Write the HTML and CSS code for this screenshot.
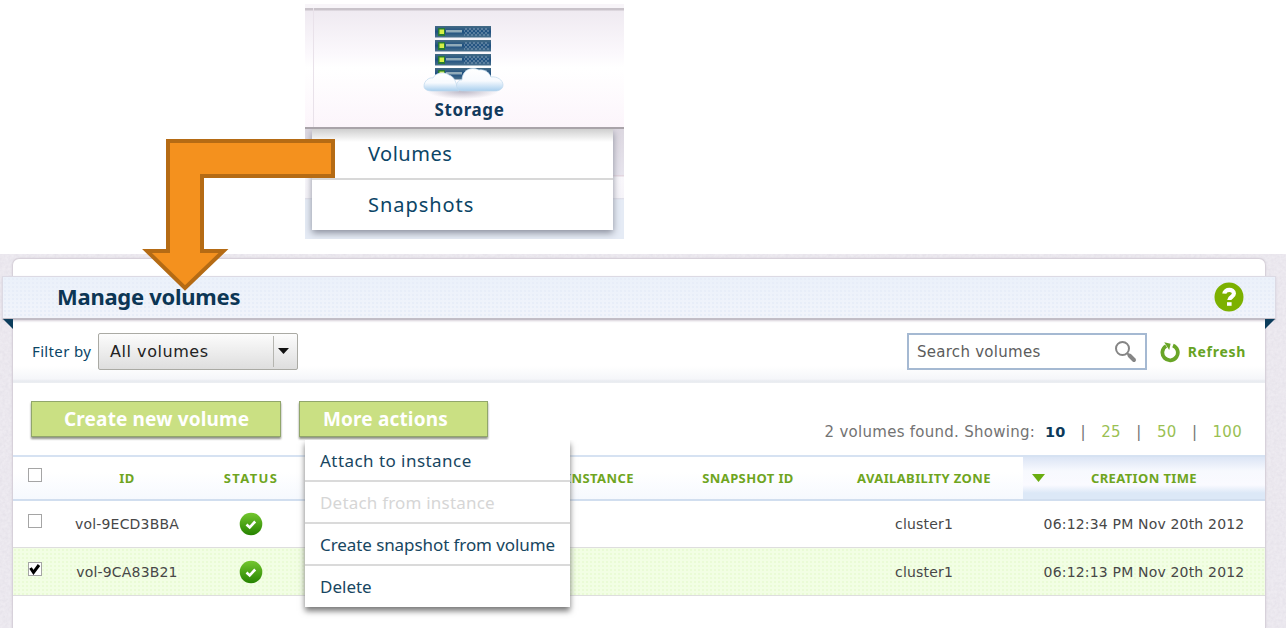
FILE: index.html
```html
<!DOCTYPE html>
<html lang="en">
<head>
<meta charset="utf-8">
<title>Manage volumes</title>
<link rel="stylesheet" href="styles.css">
</head>
<body>
<section class="nav-figure">
  <div class="nav-tab">
    <svg class="storage-icon" width="84" height="76" viewBox="0 0 84 76">
      <defs>
        <linearGradient id="rack" x1="0" y1="0" x2="0" y2="1"><stop offset="0" stop-color="#456b85"/><stop offset=".5" stop-color="#1d4f80"/><stop offset="1" stop-color="#4a708c"/></linearGradient>
        <linearGradient id="cloud" x1="0" y1="0" x2="0" y2="1"><stop offset="0" stop-color="#fff"/><stop offset=".55" stop-color="#f7fafe"/><stop offset="1" stop-color="#a9cfee"/></linearGradient>
        <radialGradient id="shade"><stop offset="0" stop-color="#b9b5c4"/><stop offset="1" stop-color="#b9b5c4" stop-opacity="0"/></radialGradient>
        <pattern id="mesh" width="4" height="4" patternUnits="userSpaceOnUse"><path d="M0 0h2v2h2v2H2V2H0z" fill="#7896b0"/></pattern>
        <g id="unit"><path d="M0 0h56v11.500H0z" fill="url(#rack)"/><path d="M29 2h25v8H29z" fill="url(#mesh)" opacity=".6"/><path d="M11 4h16v2.500H11z" fill="#91abb9"/><path d="M3 2h7v8H3z" fill="#287a35"/><path d="M4.500 3.500h4.500v4.500H4.500z" fill="#d5ef45"/></g>
      </defs>
      <ellipse cx="42" cy="67" rx="36" ry="8" fill="url(#shade)"/>
      <use href="#unit" x="14" y="2"/><use href="#unit" x="14" y="16"/><use href="#unit" x="14" y="30"/><use href="#unit" x="14" y="44"/>
      <path d="M3 62c0-5 5-9 9-8 2-5 11-7 16-3 4 1 6 5 7 8l3 8H12c-5 0-9-1-9-5z" fill="url(#cloud)" stroke="#bfd8ed" stroke-width=".7"/>
      <path d="M37 66c-3-5-1-10 4-10 0-9 8-14 17-10 5-1 10 2 12 7 6-1 12 3 12 8 0 4-4 6-8 6H45c-4 0-6 0-8-1z" fill="url(#cloud)" stroke="#bfd8ed" stroke-width=".7"/>
    </svg>
    <div class="nav-label"><span>Storage</span></div>
  </div>
  <div class="nav-under">
    <ul class="nav-menu">
      <li><span>Volumes</span></li>
      <li><span>Snapshots</span></li>
    </ul>
  </div>
</section>
<main class="screen">
  <svg class="grain" width="1286" height="374"><filter id="noise"><feTurbulence type="fractalNoise" baseFrequency=".35" numOctaves="2"/><feColorMatrix values="0 0 0 0 .6  0 0 0 0 .56  0 0 0 0 .66  .9 0 0 0 -.25"/></filter><rect width="1286" height="374" filter="url(#noise)"/></svg>
  <div class="sheet">
    <header class="ribbon">
      <h1>Manage volumes</h1>
      <svg class="help" width="30" height="30" viewBox="0 0 30 30"><circle cx="15" cy="15" r="14.500" fill="#7cb100"/><path d="M10.300 11.700c.3-5 9.600-5 9.600-.1 0 3.500-4.600 3.200-4.600 6.400" fill="none" stroke="#fff" stroke-width="4.200"/><path d="M13 20.200h4.600v3.600h-4.600z" fill="#fff"/></svg>
      <i class="fold fold-left"></i><i class="fold fold-right"></i>
    </header>
    <div class="filters">
      <label class="filter-label">Filter by</label>
      <div class="select"><span>All volumes</span><i class="select-arrow"></i></div>
      <div class="search"><span>Search volumes</span>
        <svg width="24" height="24" viewBox="0 0 24 24"><circle cx="8.500" cy="8.500" r="6.500" fill="none" stroke="#858585" stroke-width="2"/><path d="M13 13l3 3" stroke="#858585" stroke-width="2"/><path d="M15.500 15.500l4.500 4.500" stroke="#858585" stroke-width="4" stroke-linecap="round"/></svg>
      </div>
      <div class="refresh">
        <svg width="22" height="22" viewBox="0 0 22 22"><path d="M13.800 4a8.200 8.200 0 1 1-7.300.6" fill="none" stroke="#69a527" stroke-width="4"/><path d="M4.500.5l6.800 1.700-1.500 6.600z" fill="#69a527"/></svg>
        <span>Refresh</span>
      </div>
    </div>
    <div class="toolbar">
      <div class="button create"><span>Create new volume</span></div>
      <div class="button more"><span>More actions</span>
        <ul class="actions">
          <li><span class="attach">Attach to instance</span></li>
          <li class="off"><span class="detach">Detach from instance</span></li>
          <li><span class="snapshot">Create snapshot from volume</span></li>
          <li><span>Delete</span></li>
        </ul>
      </div>
      <div class="pager"><span class="found">2 volumes found. Showing:</span><b>10</b><i>|</i><a>25</a><i>|</i><a>50</a><i>|</i><a>100</a></div>
    </div>
    <div class="row head">
      <div><i class="box"></i></div><div>ID</div><div class="status">STATUS</div><div></div><div>INSTANCE</div><div>SNAPSHOT ID</div><div>AVAILABILITY ZONE</div><div class="sorted"><i class="sort"></i>CREATION TIME</div>
    </div>
    <div class="row">
      <div><i class="box"></i></div><div>vol-9ECD3BBA</div><div><svg class="ok" width="24" height="24" viewBox="0 0 24 24"><defs><linearGradient id="green" x1="0" y1="0" x2="0" y2="1"><stop offset="0" stop-color="#74c72f"/><stop offset="1" stop-color="#268300"/></linearGradient></defs><circle cx="12" cy="12" r="11.300" fill="url(#green)"/><path d="M7.500 12.500l3.200 3 5.500-6" fill="none" stroke="#fff" stroke-width="2.600"/></svg></div><div></div><div></div><div></div><div>cluster1</div><div>06:12:34 PM Nov 20th 2012</div>
    </div>
    <div class="row selected">
      <div><i class="box"><svg width="14" height="14" viewBox="0 0 14 14"><path d="M2.500 6l3 4.500L11 3" fill="none" stroke="#000" stroke-width="3"/></svg></i></div><div>vol-9CA83B21</div><div><svg class="ok" width="24" height="24" viewBox="0 0 24 24"><circle cx="12" cy="12" r="11.300" fill="url(#green)"/><path d="M7.500 12.500l3.200 3 5.500-6" fill="none" stroke="#fff" stroke-width="2.600"/></svg></div><div></div><div></div><div></div><div>cluster1</div><div>06:12:13 PM Nov 20th 2012</div>
    </div>
  </div>
</main>
<svg class="pointer" width="200" height="160" viewBox="140 135 200 160"><path d="M333 141V176H202V251H223.500L185 288L147 251H168V141Z" fill="#f4911e" stroke="#b56b14" stroke-width="4"/></svg>
</body>
</html>
```
FILE: styles.css
```css
* { box-sizing: border-box; }
body { margin: 0; width: 1286px; height: 628px; position: relative; overflow: hidden; background: #fff; font-family: "Noto Sans", sans-serif; color: #0b4566; }
ul { list-style: none; margin: 0; padding: 0; }
span, .row { white-space: nowrap; }

/* Storage tab and its menu */
.nav-figure { height: 254px; padding: 4px 0 0 305px; }
.nav-tab { width: 319px; height: 125px; border-top: 4px solid #f8f5f9; border-bottom: 2px solid #a9a3a9; background: linear-gradient(90deg, transparent 8px, #e9e2ea 8px, #e9e2ea 9px, transparent 9px), linear-gradient(#c9c3ca 2px, #efeaf1 3px, #fbf8fc 45px, #fff 60px, #fcf5fb); display: flex; flex-direction: column; align-items: center; padding-top: 16px; }
.storage-icon { margin-right: 3px; height: 76px; }
.nav-label { margin: -3px 0 0 10px; font-size: 17px; line-height: 26px; font-weight: 700; letter-spacing: .6px; color: #123a5d; }
.nav-under { width: 319px; height: 110px; padding: 0 11px 0 7px; overflow: hidden; background: linear-gradient(#dcd7e0, #e7e4ed 46px, #e3d6df 46px, #e3d6df 47px, #f9f7fb 48px, #f6f4f9 69px, #dfdce6 69px, #e5ebf5 71px); }
.nav-menu { height: 101px; background: linear-gradient(#cfcfcf, #fff 13px); box-shadow: 0 3px 7px #8b8f9c; font-size: 20px; letter-spacing: .5px; }
.nav-menu li { height: 51px; padding-left: 56px; line-height: 50px; border-bottom: 2px solid #d8d8d8; }
.nav-menu li + li { border: 0; line-height: 50px; letter-spacing: .95px; }

/* Volumes screen */
.screen { position: relative; height: 374px; padding: 4px 20px 0 12px; background: #eeebf1; }
.grain { position: absolute; left: 0; top: 0; opacity: .45; }
.sheet { position: relative; height: 370px; border: 1px solid #d7d1da; border-bottom: 0; border-radius: 7px 7px 0 0; background: #fff; padding-top: 17px; box-shadow: 0 0 2px #d4cfd8; }
.ribbon { position: relative; display: flex; align-items: center; justify-content: space-between; margin: 0 -11px; width: 1274px; height: 44px; padding: 0 31px 1px 54px; background: radial-gradient(#e7edf8 .7px, transparent 1px) 0 0 / 4px 4px, linear-gradient(#ebf1fa, #f1f4fb); border: 1px solid #dcdae4; border-bottom: 2px solid #c1bdc6; box-shadow: 0 1px 2px #d7cfd8; }
.ribbon h1 { margin: 0 0 2px; font-size: 22px; line-height: 38px; letter-spacing: -.27px; white-space: nowrap; color: #0c3655; }
.fold { position: absolute; top: 42px; width: 10px; height: 10px; background: #0c3d5c; }
.fold-left { left: 0; clip-path: polygon(0 0, 100% 0, 100% 100%); }
.fold-right { right: 0; clip-path: polygon(0 0, 100% 0, 0 100%); }
.filters { display: flex; align-items: center; height: 63px; padding: 0 19px; background: linear-gradient(#fff 46px, #f5f6f9 59px, #e8ebf0 61px, #eceef2); }
.filter-label { width: 66px; margin-bottom: 1px; font-size: 15px; letter-spacing: .35px; white-space: nowrap; }
.select { width: 200px; height: 37px; display: flex; justify-content: space-between; align-items: center; border: 1px solid #aaaaa4; border-radius: 2px; padding-left: 11px; background: linear-gradient(#fcfcfc, #dedede); font: 16px "DejaVu Sans", sans-serif; letter-spacing: .55px; color: #222; }
.select-arrow { width: 24px; height: 31px; border-left: 1px solid #b5b5b0; display: flex; padding: 12px 0 0 4px; }
.select-arrow::after { content: ""; width: 11px; height: 6px; background: #111; clip-path: polygon(0 0, 100% 0, 50% 100%); }
.search { width: 240px; height: 37px; margin-left: auto; display: flex; justify-content: space-between; align-items: center; padding: 0 7px 0 8px; border: 2px solid #a5b9d2; background: #fff; font: 15px "DejaVu Sans", sans-serif; letter-spacing: .27px; color: #5c5c5c; }
.refresh { display: flex; align-items: center; width: 99px; padding-left: 13px; gap: 7px; color: #67a323; font-weight: 700; font-size: 14px; letter-spacing: .7px; }
.toolbar { display: flex; height: 72px; padding: 18px 23px 0 18px; }
.button { position: relative; height: 36px; border: 1px solid #91a66b; background: #cae083; box-shadow: 0 2px 2px #8f9288; color: #fff; font-weight: 700; font-size: 19px; line-height: 35px; letter-spacing: .15px; }
.create { width: 250px; padding-left: 32px; margin-right: 18px; }
.more { width: 189px; padding-left: 23px; }
.actions { position: absolute; z-index: 2; left: 5px; top: 38px; width: 265px; height: 167px; background: #fff; clip-path: inset(0 -10px -12px -10px); box-shadow: 0 4px 6px #777; color: #174661; font-weight: 400; font-size: 17px; letter-spacing: 0; }
.actions li { height: 42px; padding-left: 15px; line-height: 41px; border-bottom: 2px solid #dadada; }
.actions li:last-child { border: 0; }
.actions .off { color: #d6d6d6; }
.attach { letter-spacing: .45px; }
.detach { letter-spacing: .2px; }
.snapshot { letter-spacing: -.08px; }
.pager { margin: 22px 0 0 auto; height: 18px; display: flex; align-items: center; font: 15px "DejaVu Sans", sans-serif; letter-spacing: .27px; color: #737373; white-space: nowrap; }
.pager i { font-style: normal; width: 36px; text-align: center; }
.pager b { margin-left: 10px; font-size: 14.5px; letter-spacing: 0; color: #0c3a5a; }
.pager a { color: #9abf53; }
.row { display: grid; grid-template-columns: 44px 140px 108px 224px 142px 154px 198px 242px; height: 47px; border-bottom: 1px solid #dedede; font: 14px "DejaVu Sans", sans-serif; letter-spacing: .18px; color: #474747; }
.row > div { display: flex; align-items: center; justify-content: center; }
.head { height: 46px; border-top: 2px solid #d6e2f2; border-bottom: 2px solid #d1deef; background: linear-gradient(#fff 15px, #f6f9fe); color: #6fa51e; font: 700 13px "Noto Sans", sans-serif; letter-spacing: .38px; }
.head > div { padding-bottom: 1px; }
.head .status { letter-spacing: 1.4px; }
.head .sorted { position: relative; background: linear-gradient(#dce5f5, #f7f9fe 14px, #fafaff 28px, #dce8f7 36px); }
.sort { position: absolute; left: 9px; top: 17px; width: 13px; height: 8px; background: #69ad10; clip-path: polygon(0 0, 100% 0, 50% 100%); }
.box { width: 14px; height: 14px; margin-bottom: 6px; border: 1px solid #a5a5a5; background: #fff; display: flex; }
.box svg { margin: -1px; }
.selected { height: 48px; background: radial-gradient(#eafbd6 .8px, transparent 1px) 0 0 / 4px 4px, #f2fee4; }

/* Arrow from the menu entry to the screen it opens */
.pointer { position: absolute; left: 140px; top: 135px; z-index: 5; }
```
